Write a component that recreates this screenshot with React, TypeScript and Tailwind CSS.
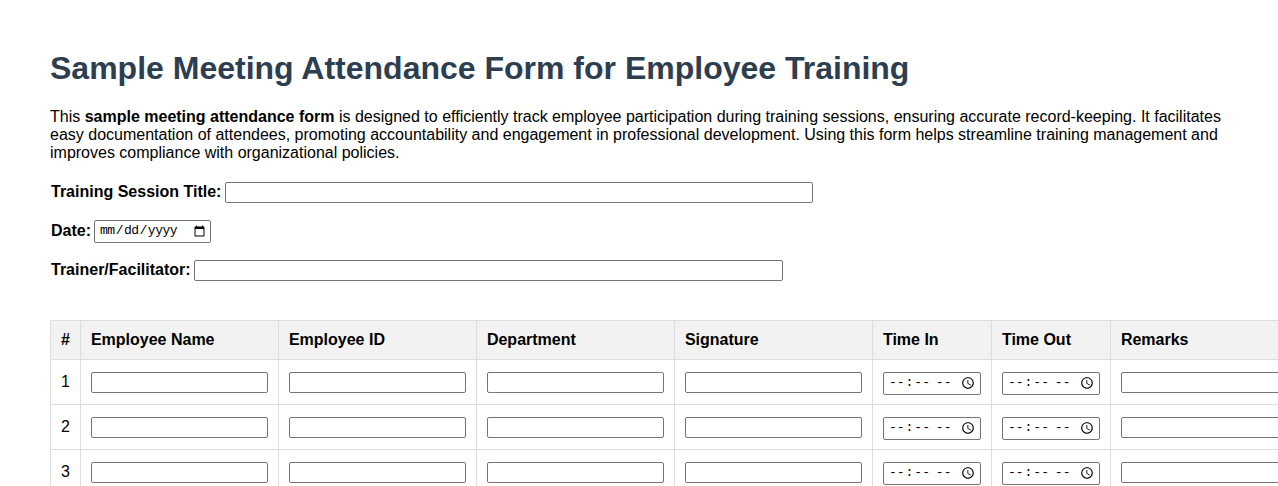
import React from "react";

const columns = ["#", "Employee Name", "Employee ID", "Department", "Signature", "Time In", "Time Out", "Remarks"];
const rows = [1, 2, 3, 4, 5];

const textInput = "w-[177px] h-[21px] border border-[#767676] rounded-[2px] px-[2px] bg-white";
const timeInput =
  "w-[98px] h-[23px] border border-[#767676] rounded-[2px] pl-[4px] pr-[2px] bg-white text-[13px] font-['Liberation_Mono',monospace]";

const App = () => {
  return (
    <div className="w-full min-h-screen overflow-hidden bg-white text-black font-['Liberation_Sans',Arial,sans-serif]">
      <div className="px-[50px] pt-[50px] pb-10">
        <h1 className="text-[32px] leading-[36px] font-bold text-[#2c3e50]">
          Sample Meeting Attendance Form for Employee Training
        </h1>
        <p className="mt-[22px] text-base leading-[18px]">
          This <strong>sample meeting attendance form</strong> is designed to efficiently track employee participation
          during training sessions, ensuring accurate record-keeping. It facilitates easy documentation of attendees,
          promoting accountability and engagement in professional development. Using this form helps streamline
          training management and improves compliance with organizational policies.
        </p>

        {/* session details */}
        <div className="mt-[19px] flex flex-col gap-[17px] pl-px">
          <div className="flex items-center h-[22px]">
            <label className="font-bold text-base mr-[4px]">Training Session Title:</label>
            <input type="text" className="w-[588px] h-[21px] border border-[#767676] rounded-[2px] px-[2px]" />
          </div>
          <div className="flex items-center h-[22px]">
            <label className="font-bold text-base mr-[3px]">Date:</label>
            <input
              type="date"
              className="w-[117px] h-[23px] border border-[#767676] rounded-[2px] pl-[4px] pr-[2px] text-[13px] tracking-[-0.5px] font-['Liberation_Mono',monospace]"
            />
          </div>
          <div className="flex items-center h-[22px]">
            <label className="font-bold text-base mr-[3px]">Trainer/Facilitator:</label>
            <input type="text" className="w-[589px] h-[21px] border border-[#767676] rounded-[2px] px-[2px]" />
          </div>
        </div>

        <table className="mt-[39px] border-collapse text-base">
          <thead>
            <tr className="h-[39px] bg-[#f2f2f2]">
              {columns.map((c) => (
                <th key={c} className="border border-[#dddddd] px-[10px] text-left font-bold">
                  {c}
                </th>
              ))}
            </tr>
          </thead>
          <tbody>
            {rows.map((n) => (
              <tr key={n} className="h-[45px]">
                <td className="border border-[#dddddd] px-[10px]">{n}</td>
                <td className="border border-[#dddddd] px-[10px]">
                  <input type="text" className={textInput} />
                </td>
                <td className="border border-[#dddddd] px-[10px]">
                  <input type="text" className={textInput} />
                </td>
                <td className="border border-[#dddddd] px-[10px]">
                  <input type="text" className={textInput} />
                </td>
                <td className="border border-[#dddddd] px-[10px]">
                  <input type="text" className={textInput} />
                </td>
                <td className="border border-[#dddddd] px-[10px]">
                  <input type="time" className={timeInput} />
                </td>
                <td className="border border-[#dddddd] px-[10px]">
                  <input type="time" className={timeInput} />
                </td>
                <td className="border border-[#dddddd] px-[10px]">
                  <input type="text" className={textInput} />
                </td>
              </tr>
            ))}
          </tbody>
        </table>
      </div>
    </div>
  );
};

export default App;
